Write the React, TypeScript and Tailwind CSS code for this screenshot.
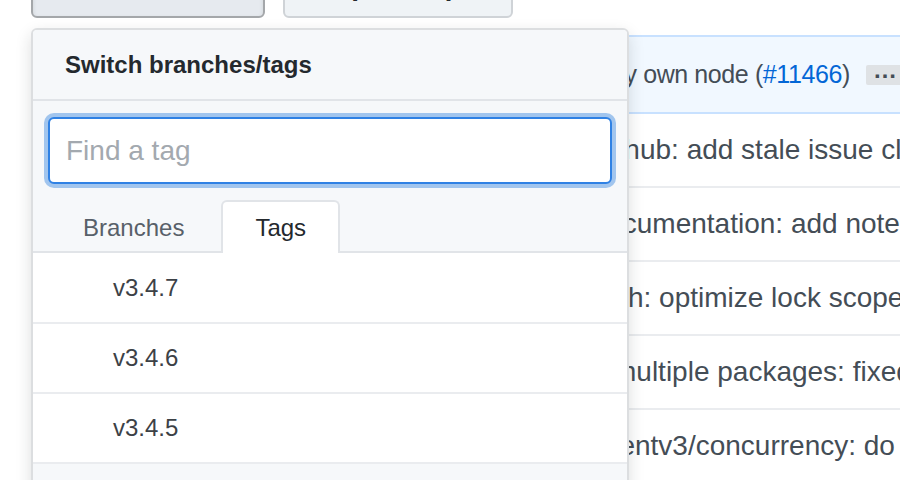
import React from "react";

const rows = [
  { pad: "pl-[556px]", text: ".github: add stale issue close bot" },
  { pad: "pl-[556px]", text: "Documentation: add notes on latest release" },
  { pad: "pl-[558px]", text: "auth: optimize lock scope for CheckPassword" },
  { pad: "pl-[582px]", text: "multiple packages: fixed typos" },
  { pad: "pl-[562px]", text: "clientv3/concurrency: do not swallow error" },
];

const tags = ["v3.4.7", "v3.4.6", "v3.4.5"];

export default function App() {
  return (
    <div className="relative w-[900px] h-[480px] overflow-hidden bg-white font-['Liberation_Sans',Arial,sans-serif]">
      {/* buttons row (scrolled mostly out of view) */}
      <div className="flex gap-[18px] pl-[31px]">
        <div className="-mt-[46px] flex h-[64px] w-[234px] items-center whitespace-nowrap rounded-[6px] border-2 border-[#a4a7aa] bg-[#e6eaef] px-[30px] text-[28px] font-bold text-[#24292e] shadow-[inset_0_2px_4px_rgba(27,31,35,0.12)]">
          Branch: master
        </div>
        <div className="-mt-[46px] flex h-[64px] w-[230px] items-center justify-center whitespace-nowrap rounded-[6px] border-2 border-[#cfd3d7] bg-[#eff3f6] text-[28px] font-bold text-[#24292e]">
          New pull request
        </div>
      </div>

      {/* commit / file list behind the menu */}
      <div className="ml-[31px] mt-[17px] w-[1000px] text-[28px] text-[#444d56]">
        <div className="flex h-[79px] items-center border-y-2 border-[#c8e1ff] bg-[#f1f8ff] pl-[580px]">
          <span className="whitespace-nowrap text-[25px] tracking-[-0.4px]">
            by own node (<span className="text-[#0366d6]">#11466</span>)
          </span>
          <span className="ml-[16px] flex h-[20px] items-center rounded-[2px] bg-[#dfe2e5] px-[7px] text-[24px] font-bold leading-none text-[#444d56]">
            <span className="-mt-[10px]">…</span>
          </span>
        </div>
        {rows.map((r) => (
          <div
            key={r.text}
            className={`flex h-[74px] items-center whitespace-nowrap border-b-2 border-[#eaecef] ${r.pad}`}
          >
            {r.text}
          </div>
        ))}
      </div>

      {/* dropdown menu */}
      <div className="absolute left-[31px] top-[28px] flex h-[480px] w-[598px] flex-col overflow-hidden rounded-[6px] border-2 border-[#dcdee0] bg-white shadow-[0_6px_16px_rgba(27,31,35,0.15)]">
        <div className="flex h-[71px] shrink-0 items-center border-b-2 border-[#e1e4e8] bg-[#f6f8fa] pl-[32px] text-[24px] font-bold text-[#24292e]">
          Switch branches/tags
        </div>
        <div className="shrink-0 bg-[#f6f8fa]">
          <div className="px-[15px] pt-[16px]">
            <div className="flex h-[67px] items-center rounded-[6px] border-2 border-[#2f81e4] bg-white pl-[16px] text-[28px] text-[#a3a9af] shadow-[0_0_0_4px_rgba(3,102,214,0.35)]">
              Find a tag
            </div>
          </div>
          <div className="mt-[16px] flex items-end gap-[5px] border-b-2 border-[#e1e4e8] pl-[18px]">
            <div className="-mb-[2px] flex h-[53px] items-center px-[32px] pt-[2px] text-[24px] text-[#586069]">
              Branches
            </div>
            <div className="-mb-[2px] flex h-[53px] items-center rounded-t-[6px] border-2 border-b-0 border-[#e1e4e8] bg-white px-[32px] text-[24px] text-[#24292e]">
              Tags
            </div>
          </div>
        </div>
        {tags.map((t, i) => (
          <div
            key={t}
            className={`flex shrink-0 items-center border-b-2 border-[#eaecef] bg-white pl-[80px] text-[24px] text-[#3c4146] ${i === 0 ? "h-[71px]" : "h-[70px]"}`}
          >
            {t}
          </div>
        ))}
        <div className="flex-1 bg-[#f6f8fa]" />
      </div>
    </div>
  );
}
